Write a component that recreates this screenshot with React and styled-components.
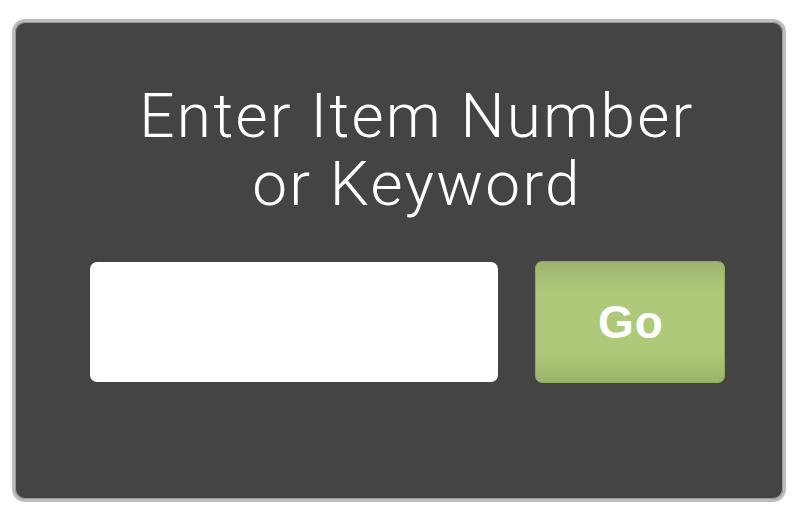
import React from 'react';
import styled, {createGlobalStyle} from 'styled-components';

const GlobalStyle = createGlobalStyle`
  html, body {
    margin: 0;
    padding: 0;
    background: #ffffff;
  }
`;

const Page = styled.div`
  padding: 19px 14px 15px 12px;
`;

const Panel = styled.div`
  box-sizing: border-box;
  width: 774px;
  height: 483px;
  border: 3px solid #bdbdbd;
  border-radius: 13px;
  background: #444444;
  box-shadow: inset 0 0 0 1px #9a9a9a;
  display: flex;
  flex-direction: column;
  align-items: stretch;
  padding: 60px 0 0 75px;
`;

const Title = styled.h1`
  margin: 0;
  padding-left: 17px;
  font-family: Roboto, "Liberation Sans", sans-serif;
  font-weight: 300;
  font-size: 62px;
  line-height: 68px;
  letter-spacing: 2.3px;
  color: #ffffff;
  text-align: center;
  width: 620px;
`;

const SearchRow = styled.div`
  display: flex;
  align-items: center;
  gap: 37px;
  margin-top: 43px;
`;

const Field = styled.input`
  box-sizing: border-box;
  width: 408px;
  height: 120px;
  border: none;
  border-radius: 7px;
  background: #ffffff;
  outline: none;
`;

const GoButton = styled.button`
  box-sizing: border-box;
  width: 190px;
  height: 122px;
  padding: 0 0 0 2px;
  border: 1px solid #8fa960;
  border-radius: 7px;
  background: linear-gradient(#9db46c 0%, #aec979 25%, #aec979 75%, #9cb26b 100%);
  color: #ffffff;
  font-family: "Liberation Sans", Arial, sans-serif;
  font-weight: 700;
  font-size: 46px;
  letter-spacing: 1px;
  cursor: pointer;
`;

export default function App() {
  return (
    <>
      <GlobalStyle/>
      <Page>
        <Panel>
          <Title>Enter Item Number<br/>or Keyword</Title>
          <SearchRow>
            <Field type="text"/>
            <GoButton>Go</GoButton>
          </SearchRow>
        </Panel>
      </Page>
    </>
  );
}
